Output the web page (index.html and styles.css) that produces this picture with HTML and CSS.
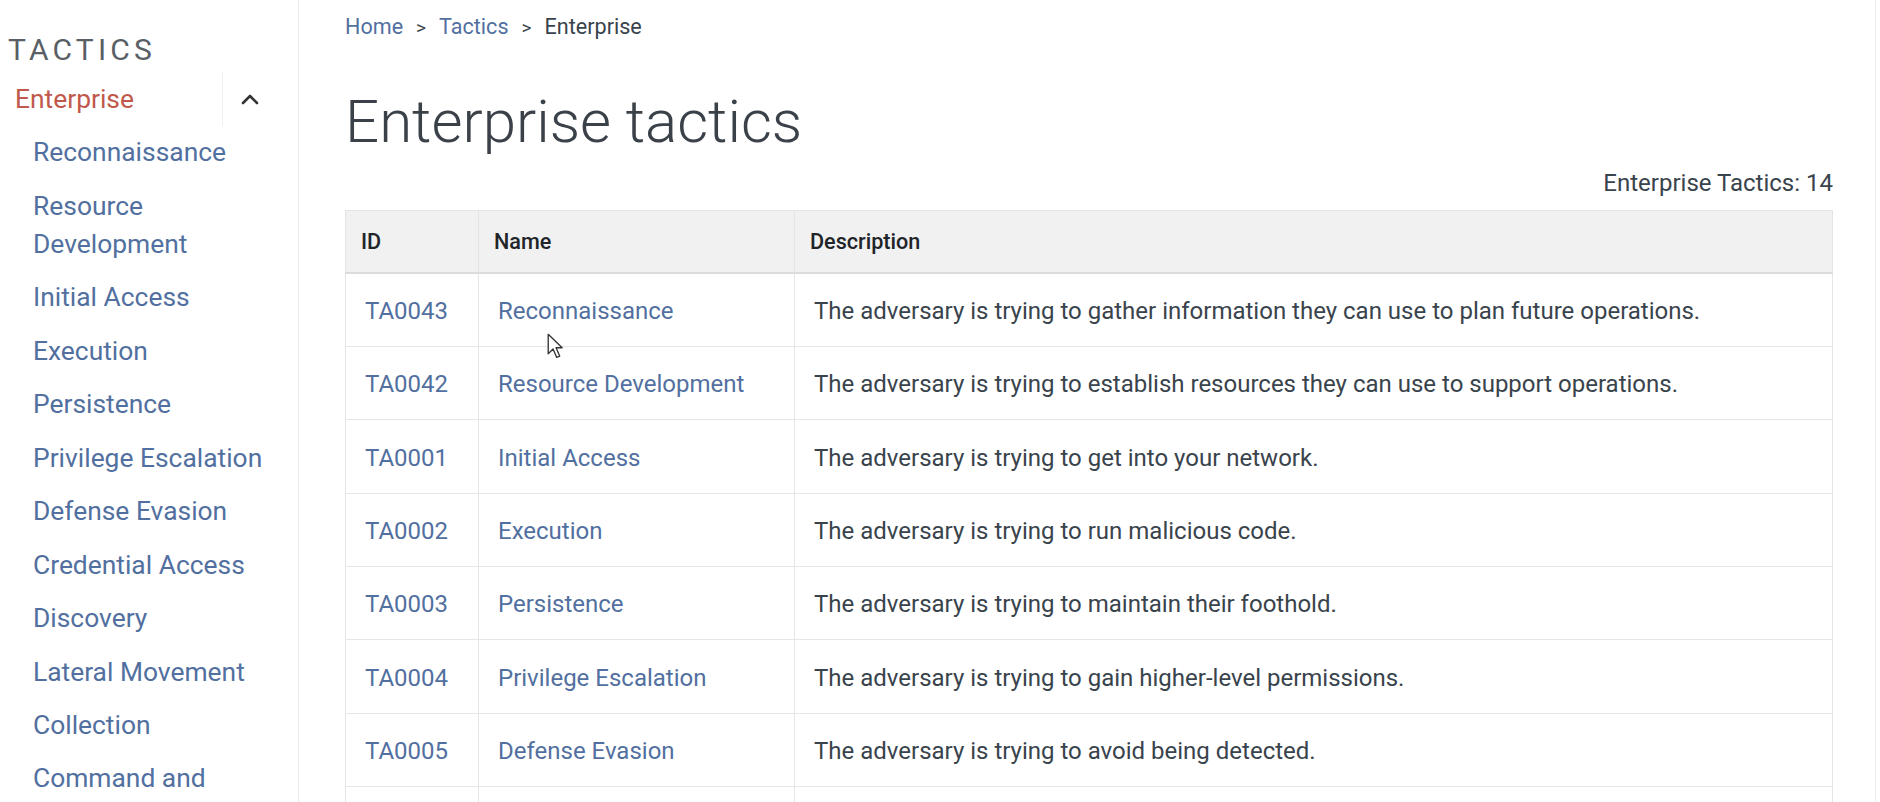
FILE: index.html
```html
<!DOCTYPE html>
<html lang="en">
<head>
<meta charset="utf-8">
<title>Enterprise tactics</title>
<link rel="stylesheet" href="styles.css">
</head>
<body>
<div class="page">
  <aside class="sidebar">
    <div class="side-heading">TACTICS</div>
    <div class="side-parent">
      <a class="side-active" href="#">Enterprise</a>
      <span class="side-toggle">
        <svg width="18" height="12" viewBox="0 0 18 12"><path d="M2 10 L9 3 L16 10" fill="none" stroke="#333" stroke-width="2.6" stroke-linecap="round" stroke-linejoin="round"/></svg>
      </span>
    </div>
    <ul class="side-list">
      <li><a href="#">Reconnaissance</a></li>
      <li><a href="#">Resource Development</a></li>
      <li><a href="#">Initial Access</a></li>
      <li><a href="#">Execution</a></li>
      <li><a href="#">Persistence</a></li>
      <li><a href="#">Privilege Escalation</a></li>
      <li><a href="#">Defense Evasion</a></li>
      <li><a href="#">Credential Access</a></li>
      <li><a href="#">Discovery</a></li>
      <li><a href="#">Lateral Movement</a></li>
      <li><a href="#">Collection</a></li>
      <li><a href="#">Command and Control</a></li>
      <li><a href="#">Exfiltration</a></li>
      <li><a href="#">Impact</a></li>
    </ul>
  </aside>
  <main class="main">
    <nav class="crumbs">
      <a href="#">Home</a><span class="sep">&gt;</span><a href="#">Tactics</a><span class="sep">&gt;</span><span class="current">Enterprise</span>
    </nav>
    <h1 class="title">Enterprise tactics</h1>
    <div class="count">Enterprise Tactics: 14</div>
    <table class="tactics">
      <colgroup><col class="c-id"><col class="c-name"><col class="c-desc"></colgroup>
      <thead>
        <tr><th>ID</th><th>Name</th><th>Description</th></tr>
      </thead>
      <tbody>
        <tr><td><a href="#">TA0043</a></td><td><a href="#">Reconnaissance</a></td><td>The adversary is trying to gather information they can use to plan future operations.</td></tr>
        <tr><td><a href="#">TA0042</a></td><td><a href="#">Resource Development</a></td><td>The adversary is trying to establish resources they can use to support operations.</td></tr>
        <tr><td><a href="#">TA0001</a></td><td><a href="#">Initial Access</a></td><td>The adversary is trying to get into your network.</td></tr>
        <tr><td><a href="#">TA0002</a></td><td><a href="#">Execution</a></td><td>The adversary is trying to run malicious code.</td></tr>
        <tr><td><a href="#">TA0003</a></td><td><a href="#">Persistence</a></td><td>The adversary is trying to maintain their foothold.</td></tr>
        <tr><td><a href="#">TA0004</a></td><td><a href="#">Privilege Escalation</a></td><td>The adversary is trying to gain higher-level permissions.</td></tr>
        <tr><td><a href="#">TA0005</a></td><td><a href="#">Defense Evasion</a></td><td>The adversary is trying to avoid being detected.</td></tr>
        <tr><td><a href="#">TA0006</a></td><td><a href="#">Credential Access</a></td><td>The adversary is trying to steal account names and passwords.</td></tr>
      </tbody>
    </table>
  </main>
</div>
<svg class="cursor" width="17" height="27" viewBox="0 0 14 22"><path d="M1 1 L1 17 L5 13 L8 20 L10.5 19 L7.5 12 L12.5 12 Z" fill="#fff" stroke="#333" stroke-width="1.1" stroke-linejoin="round"/></svg>
</body>
</html>
```

FILE: styles.css
```css
html, body {
  margin: 0;
  padding: 0;
  height: 802px;
  overflow: hidden;
  background: #fff;
}
body {
  font-family: Roboto, "Liberation Sans", sans-serif;
  color: #39434c;
  position: relative;
}
a {
  text-decoration: none;
  color: #52709f;
}
.page {
  display: flex;
  align-items: flex-start;
  height: 802px;
}
.sidebar {
  width: 277px;
  flex-shrink: 0;
  padding: 32px 21px 0 0;
  border-right: 1px solid #ebebeb;
  height: 770px;
}
.side-heading {
  padding-left: 8px;
  font-size: 30px;
  line-height: 36px;
  letter-spacing: 4.2px;
  color: #5a5f66;
  margin-bottom: 4px;
}
.side-parent {
  display: flex;
  justify-content: space-between;
  padding-left: 15px;
}
.side-active {
  font-size: 26.4px;
  line-height: 38.4px;
  padding: 7.6px 0;
  color: #c0584b;
}
.side-toggle {
  width: 54px;
  border-left: 1px solid #efefef;
  display: flex;
  align-items: center;
  justify-content: center;
}
.side-list {
  list-style: none;
  margin: 0;
  padding: 0 0 0 33px;
}
.side-list li {
  font-size: 26.4px;
  line-height: 38.4px;
  padding: 7.5px 0 7.55px;
}
.main {
  flex: 1;
  padding: 11px 42px 0 46px;
  border-right: 1px solid #ededed;
  margin-right: 4px;
  height: 791px;
}
.crumbs {
  font-size: 21.6px;
  line-height: 32px;
  color: #39434c;
}
.crumbs .sep {
  margin: 0 13px;
  font-size: 19px;
}
.title {
  margin: 42px 0 0;
  font-size: 60px;
  line-height: 72px;
  font-weight: 300;
  color: #3b4148;
}
.count {
  margin-top: 9px;
  text-align: right;
  font-size: 24px;
  line-height: 32px;
  color: #39434c;
}
.tactics {
  margin-top: 11px;
  width: 100%;
  table-layout: fixed;
  border-collapse: collapse;
  border: 1px solid #e4e4e4;
}
.c-id { width: 133px; }
.c-name { width: 316px; }
.tactics th {
  background: #f1f1f1;
  text-align: left;
  font-size: 21.6px;
  font-weight: 500;
  color: #212529;
  height: 62px;
  padding: 0 15px;
  border: 1px solid #e4e4e4;
  border-bottom: 2px solid #dcdcdc;
  box-sizing: border-box;
}
.tactics td {
  font-size: 24px;
  line-height: 36px;
  padding: 19.4px 19px 17px 19px;
  border: 1px solid #e6e6e6;
  color: #39434c;
}
.cursor {
  position: absolute;
  left: 547px;
  top: 333px;
}
```
